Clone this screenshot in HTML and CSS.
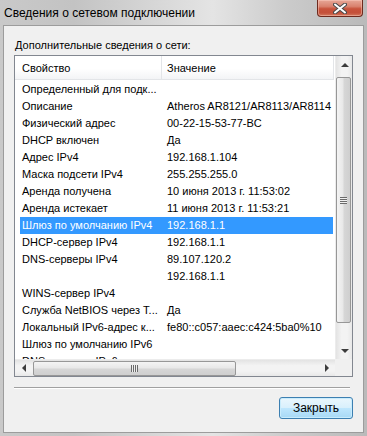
FILE: index.html
```html
<!DOCTYPE html>
<html lang="ru">
<head>
    <meta charset="UTF-8">
    <title>Сведения о сетевом подключении</title>
    <link rel="stylesheet" href="styles.css">
</head>
<body>
    <div class="window">
        <div class="titlebar">
            <span class="title">Сведения о сетевом подключении</span>
            <button class="close-btn">
                <svg width="14" height="11" viewBox="0 0 14 11">
                    <path d="M2 1.5 L12 9.5 M12 1.5 L2 9.5" stroke="#4a4a4a" stroke-width="4" stroke-linecap="round"/>
                    <path d="M2 1.5 L12 9.5 M12 1.5 L2 9.5" stroke="#ffffff" stroke-width="2" stroke-linecap="round"/>
                </svg>
            </button>
        </div>

        <div class="client">
            <div class="caption">Дополнительные сведения о сети:</div>

            <div class="listview">
                <div class="lv-main">
                    <div class="lv-body">
                        <div class="lv-header">
                            <div class="hd-cell hd-first">Свойство</div>
                            <div class="hd-cell hd-second">Значение</div>
                        </div>
                        <div class="lv-rows">
                            <div class="row"><span class="c1">Определенный для подк...</span><span class="c2"></span></div>
                            <div class="row"><span class="c1">Описание</span><span class="c2">Atheros AR8121/AR8113/AR8114</span></div>
                            <div class="row"><span class="c1">Физический адрес</span><span class="c2">00-22-15-53-77-BC</span></div>
                            <div class="row"><span class="c1">DHCP включен</span><span class="c2">Да</span></div>
                            <div class="row"><span class="c1">Адрес IPv4</span><span class="c2">192.168.1.104</span></div>
                            <div class="row"><span class="c1">Маска подсети IPv4</span><span class="c2">255.255.255.0</span></div>
                            <div class="row"><span class="c1">Аренда получена</span><span class="c2">10 июня 2013 г. 11:53:02</span></div>
                            <div class="row"><span class="c1">Аренда истекает</span><span class="c2">11 июня 2013 г. 11:53:21</span></div>
                            <div class="row selected"><span class="c1">Шлюз по умолчанию IPv4</span><span class="c2">192.168.1.1</span></div>
                            <div class="row"><span class="c1">DHCP-сервер IPv4</span><span class="c2">192.168.1.1</span></div>
                            <div class="row"><span class="c1">DNS-серверы IPv4</span><span class="c2">89.107.120.2</span></div>
                            <div class="row"><span class="c1"></span><span class="c2">192.168.1.1</span></div>
                            <div class="row"><span class="c1">WINS-сервер IPv4</span><span class="c2"></span></div>
                            <div class="row"><span class="c1">Служба NetBIOS через Т...</span><span class="c2">Да</span></div>
                            <div class="row"><span class="c1">Локальный IPv6-адрес к...</span><span class="c2">fe80::c057:aaec:c424:5ba0%10</span></div>
                            <div class="row"><span class="c1">Шлюз по умолчанию IPv6</span><span class="c2"></span></div>
                            <div class="row"><span class="c1">DNS-серверы IPv6</span><span class="c2"></span></div>
                        </div>
                    </div>

                    <div class="vscroll">
                        <div class="arrow-box"><span class="arrow up"></span></div>
                        <div class="v-track">
                            <div class="v-thumb"><span class="grip-h"></span></div>
                        </div>
                        <div class="arrow-box"><span class="arrow down"></span></div>
                    </div>
                </div>

                <div class="hscroll-row">
                    <div class="hscroll">
                        <div class="arrow-box"><span class="arrow left"></span></div>
                        <div class="h-track">
                            <div class="h-thumb"><span class="grip-v"></span></div>
                        </div>
                        <div class="arrow-box"><span class="arrow right"></span></div>
                    </div>
                    <div class="corner"></div>
                </div>
            </div>

            <div class="separator"></div>

            <div class="button-row">
                <button class="btn">Закрыть</button>
            </div>
        </div>
    </div>
</body>
</html>
```

FILE: styles.css
```css
* {
    margin: 0;
    padding: 0;
    box-sizing: border-box;
}

body {
    width: 367px;
    height: 436px;
    overflow: hidden;
    font-family: "Liberation Sans", Arial, sans-serif;
    font-size: 11px;
    color: #000;
}

.window {
    width: 367px;
    height: 436px;
    display: flex;
    flex-direction: column;
    padding: 0 3px 3px 3px;
    background: linear-gradient(90deg, #c9c9c9 0%, #c3c3c3 20%, #d9d9d9 45%, #e4e4e4 58%, #cbcbcb 78%, #bababa 100%);
}

.titlebar {
    height: 25px;
    display: flex;
    align-items: flex-start;
    justify-content: space-between;
}

.title {
    font-size: 12px;
    line-height: 15px;
    margin-top: 6px;
    margin-left: 1px;
    color: #000;
}

.close-btn {
    width: 46px;
    height: 17px;
    margin-right: 1px;
    border: 1px solid #6e2a1e;
    border-top: none;
    border-radius: 0 0 4px 4px;
    background: linear-gradient(180deg, #e7a797 0%, #d9826e 40%, #c8533b 55%, #c4503a 80%, #d27a5e 100%);
    box-shadow: inset 0 0 0 1px rgba(255, 210, 200, 0.45);
    display: flex;
    align-items: center;
    justify-content: center;
}

.client {
    flex: 1;
    background: #f0f0f0;
    border: 1px solid #9c9c9c;
    padding: 12px 10px 0 10px;
    display: flex;
    flex-direction: column;
}

.caption {
    height: 15px;
    line-height: 15px;
    margin-bottom: 2px;
    padding-left: 1px;
}

.listview {
    width: 339px;
    height: 322px;
    border: 1px solid #828790;
    background: #fff;
    display: flex;
    flex-direction: column;
}

.lv-main {
    height: 303px;
    display: flex;
}

.lv-body {
    flex: 1;
    overflow: hidden;
}

.lv-header {
    height: 24px;
    width: 319px;
    display: flex;
    background: linear-gradient(180deg, #ffffff 0%, #ffffff 55%, #f3f4f6 100%);
    border-bottom: 1px solid #e3e5e8;
    border-right: 1px solid #e3e5e8;
}

.hd-cell {
    line-height: 24px;
    white-space: nowrap;
}

.hd-first {
    width: 147px;
    padding-left: 7px;
    border-right: 1px solid #e3e5e8;
}

.hd-second {
    padding-left: 5px;
}

.lv-rows {
    margin-top: 1px;
}

.row {
    height: 17px;
    line-height: 17px;
    margin-left: 5px;
    width: 313px;
    display: flex;
    white-space: nowrap;
}

.row.selected {
    background: #3399ff;
    color: #fff;
}

.c1 {
    width: 146px;
    padding-left: 2px;
    flex-shrink: 0;
}

.c2 {
    padding-left: 1px;
}

/* scrollbars */
.vscroll {
    width: 17px;
    display: flex;
    flex-direction: column;
    background: linear-gradient(90deg, #e3e3e3 0%, #f3f3f3 35%, #f3f3f3 70%, #e8e8e8 100%);
    border-left: 1px solid #ececec;
}

.arrow-box {
    width: 17px;
    height: 17px;
    display: flex;
    align-items: center;
    justify-content: center;
    flex-shrink: 0;
}

.arrow {
    width: 0;
    height: 0;
    border: 4px solid transparent;
}

.arrow.up {
    border-bottom-color: #3c3c3c;
    border-top-width: 0;
}

.arrow.down {
    border-top-color: #3c3c3c;
    border-bottom-width: 0;
}

.arrow.left {
    border-right-color: #3c3c3c;
    border-left-width: 0;
}

.arrow.right {
    border-left-color: #3c3c3c;
    border-right-width: 0;
}

.v-track {
    flex: 1;
    padding-top: 4px;
}

.v-thumb {
    width: 15px;
    height: 246px;
    border: 1px solid #979797;
    border-radius: 2px;
    background: linear-gradient(90deg, #f4f4f4 0%, #e8e8e8 45%, #d6d6d6 55%, #cfcfcf 100%);
    display: flex;
    align-items: center;
    justify-content: center;
}

.grip-h {
    width: 7px;
    height: 7px;
    background: repeating-linear-gradient(180deg, #6b6b6b 0, #6b6b6b 1px, #f0f0f0 1px, #f0f0f0 2px);
}

.hscroll-row {
    height: 17px;
    display: flex;
}

.hscroll {
    flex: 1;
    display: flex;
    background: linear-gradient(180deg, #e3e3e3 0%, #f3f3f3 35%, #f3f3f3 70%, #e8e8e8 100%);
    border-top: 1px solid #ececec;
}

.hscroll .arrow-box {
    height: 16px;
}

.h-track {
    flex: 1;
    display: flex;
    align-items: center;
}

.h-thumb {
    width: 203px;
    height: 15px;
    margin-left: 1px;
    border: 1px solid #979797;
    border-radius: 2px;
    background: linear-gradient(180deg, #f4f4f4 0%, #e8e8e8 45%, #d6d6d6 55%, #cfcfcf 100%);
    display: flex;
    align-items: center;
    justify-content: center;
}

.grip-v {
    width: 7px;
    height: 7px;
    background: repeating-linear-gradient(90deg, #6b6b6b 0, #6b6b6b 1px, #f0f0f0 1px, #f0f0f0 2px);
}

.corner {
    width: 17px;
    background: #f0f0f0;
}

.separator {
    margin-top: 10px;
    width: 336px;
    border-top: 1px solid #a0a0a0;
    border-bottom: 1px solid #ffffff;
}

.button-row {
    margin-top: 8px;
    display: flex;
    justify-content: flex-end;
}

.btn {
    width: 74px;
    height: 22px;
    font-family: "Liberation Sans", Arial, sans-serif;
    font-size: 12px;
    color: #000;
    border: 1px solid #3c7fb1;
    border-radius: 3px;
    background: linear-gradient(180deg, #eaf6fd 0%, #d9f0fc 48%, #bee6fd 52%, #a7d9f5 100%);
    box-shadow: inset 0 0 0 1px #c9ecfc;
}
```
